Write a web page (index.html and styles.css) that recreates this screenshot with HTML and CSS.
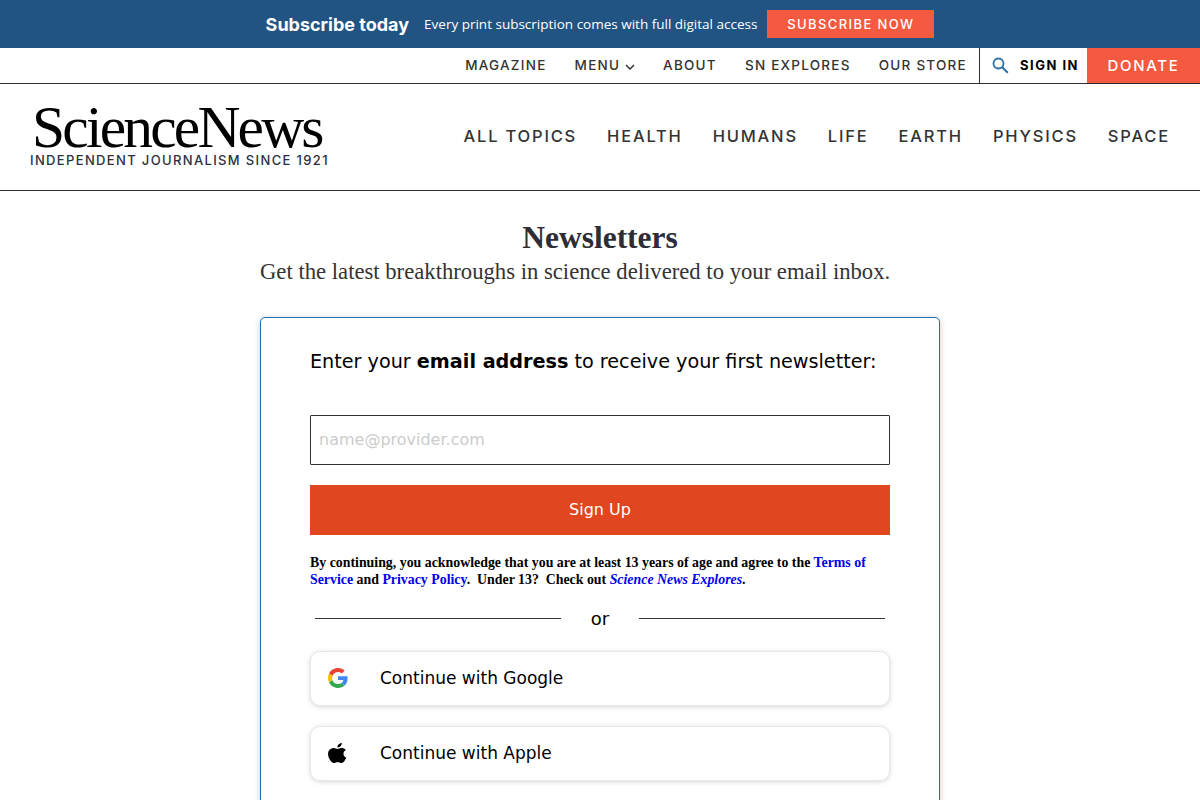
FILE: index.html
```html
<!DOCTYPE html>
<html lang="en">
<head>
    <meta charset="UTF-8">
    <meta name="viewport" content="width=device-width, initial-scale=1.0">
    <title>Newsletters - Science News</title>
    <link rel="stylesheet" href="styles.css">
</head>
<body>
    <div class="promo">
        <span class="promo-title">Subscribe today</span>
        <span class="promo-text">Every print subscription comes with full digital access</span>
        <a href="#" class="promo-button">SUBSCRIBE NOW</a>
    </div>

    <div class="topbar">
        <nav class="topnav">
            <a href="#">MAGAZINE</a>
            <a href="#">MENU
                <svg class="chevron" viewBox="0 0 10 6" width="10" height="6"><path d="M1 1l4 4 4-4" fill="none" stroke="#333" stroke-width="1.5"/></svg>
            </a>
            <a href="#">ABOUT</a>
            <a href="#">SN EXPLORES</a>
            <a href="#">OUR STORE</a>
        </nav>
        <div class="account">
            <svg class="search-icon" viewBox="0 0 17 17" width="17" height="17"><circle cx="6.500" cy="6.500" r="5" fill="none" stroke="#2a6fa8" stroke-width="1.800"/><path d="M10.200 10.200l5.600 5.600" stroke="#2a6fa8" stroke-width="2"/></svg>
            <a href="#" class="signin">SIGN IN</a>
        </div>
        <a href="#" class="donate">DONATE</a>
    </div>

    <header class="masthead">
        <a href="#" class="logo">
            <span class="logo-name">ScienceNews</span>
            <span class="logo-tag">INDEPENDENT JOURNALISM SINCE 1921</span>
        </a>
        <nav class="mainnav">
            <a href="#">ALL TOPICS</a>
            <a href="#">HEALTH</a>
            <a href="#">HUMANS</a>
            <a href="#">LIFE</a>
            <a href="#">EARTH</a>
            <a href="#">PHYSICS</a>
            <a href="#">SPACE</a>
        </nav>
    </header>

    <main class="content">
        <h1>Newsletters</h1>
        <p class="intro">Get the latest breakthroughs in science delivered to your email inbox.</p>

        <section class="card">
            <p class="card-lead">Enter your <strong>email address</strong> to receive your first newsletter:</p>
            <input class="email" type="email" placeholder="name@provider.com">
            <button class="signup">Sign Up</button>
            <p class="legal">By continuing, you acknowledge that you are at least 13 years of age and agree to the <a href="#">Terms of Service</a> and <a href="#">Privacy Policy</a>.&nbsp; Under 13?&nbsp; Check out <a href="#"><em>Science News Explores</em></a>.</p>
            <div class="divider"><span>or</span></div>
            <button class="social">
                <svg viewBox="0 0 48 48" width="20" height="20"><path fill="#EA4335" d="M24 9.500c3.500 0 6.700 1.200 9.200 3.600l6.900-6.900C35.900 2.400 30.500 0 24 0 14.600 0 6.500 5.400 2.600 13.200l8 6.200C12.500 13.600 17.800 9.500 24 9.500z"/><path fill="#4285F4" d="M47 24.500c0-1.600-.1-3.100-.4-4.500H24v9h12.900c-.6 3-2.200 5.500-4.700 7.200l7.700 6C44.400 37.900 47 31.800 47 24.500z"/><path fill="#FBBC05" d="M10.500 28.600c-.5-1.400-.8-3-.8-4.600s.3-3.200.8-4.600l-8-6.200C.9 16.500 0 20.100 0 24s.9 7.500 2.600 10.800l7.900-6.200z"/><path fill="#34A853" d="M24 48c6.500 0 11.900-2.100 15.900-5.800l-7.700-6c-2.200 1.500-4.900 2.300-8.200 2.300-6.200 0-11.500-4.200-13.400-9.900l-8 6.200C6.500 42.600 14.600 48 24 48z"/></svg>
                <span>Continue with Google</span>
            </button>
            <button class="social">
                <svg viewBox="4 1.800 14.100 16.200" preserveAspectRatio="none" width="20" height="20"><path fill="#000" d="M14.900 10.500c0-2 1.600-2.900 1.700-3-0.900-1.400-2.400-1.600-2.900-1.600-1.200-.1-2.400.7-3 .7s-1.600-.7-2.600-.7C6.700 5.900 5.400 6.700 4.700 7.900c-1.400 2.400-.4 6 1 8 .7 1 1.500 2.100 2.500 2 1 0 1.400-.6 2.600-.6s1.600.6 2.600.6c1.100 0 1.800-1 2.400-2 .8-1.100 1.100-2.200 1.100-2.300-.1 0-2-.8-2-3.100zM12.900 4.300c.5-.7.900-1.600.8-2.500-.8 0-1.700.5-2.300 1.200-.5.600-.9 1.500-.8 2.400.9.100 1.800-.4 2.300-1.100z"/></svg>
                <span>Continue with Apple</span>
            </button>
        </section>
    </main>
</body>
</html>
```

FILE: styles.css
```css
* {
    margin: 0;
    padding: 0;
    box-sizing: border-box;
}

body {
    height: 800px;
    overflow: hidden;
    background: #fff;
    color: #000;
    font-family: "DejaVu Sans", sans-serif;
}

a {
    text-decoration: none;
    color: inherit;
}

.promo {
    height: 48px;
    background: #215483;
    color: #fff;
    display: flex;
    align-items: center;
    justify-content: center;
}

.promo-title {
    font-family: "Inter", sans-serif;
    font-weight: 700;
    font-size: 18px;
    margin-right: 15px;
}

.promo-text {
    font-family: "Open Sans", sans-serif;
    font-size: 13.500px;
    margin-right: 10px;
}

.promo-button {
    width: 167px;
    height: 28px;
    background: #f55a40;
    font-family: "Inter", sans-serif;
    font-weight: 500;
    font-size: 13px;
    letter-spacing: 1.400px;
    display: flex;
    align-items: center;
    justify-content: center;
}

.topbar {
    height: 36px;
    display: flex;
    justify-content: flex-end;
    border-bottom: 1px solid #2d2d36;
    font-family: "Inter", sans-serif;
}

.topnav {
    display: flex;
    align-items: center;
    gap: 28px;
    padding-right: 12px;
    padding-bottom: 2px;
    font-size: 13.500px;
    font-weight: 500;
    letter-spacing: 1.250px;
    color: #333;
}

.account {
    width: 108px;
    display: flex;
    align-items: center;
    padding-left: 12px;
    border-left: 1px solid #2d2d36;
}

.signin {
    margin-left: 11px;
    padding-bottom: 2px;
    font-weight: 700;
    font-size: 13px;
    letter-spacing: 1.500px;
}

.donate {
    width: 113px;
    background: #f55a40;
    color: #fff;
    font-size: 15px;
    font-weight: 500;
    letter-spacing: 1.700px;
    display: flex;
    align-items: center;
    justify-content: center;
    padding-bottom: 1px;
}

.masthead {
    height: 107px;
    display: flex;
    justify-content: space-between;
    align-items: center;
    padding: 0 30px;
    border-bottom: 1px solid #2d2d36;
}

.logo {
    display: flex;
    flex-direction: column;
    margin-bottom: 4px;
}

.logo-name {
    font-family: "Liberation Serif", serif;
    font-size: 59.500px;
    line-height: 49px;
    letter-spacing: -2.800px;
    padding-left: 2px;
    color: #000;
}

.logo-tag {
    font-family: "Inter", sans-serif;
    font-weight: 500;
    font-size: 13px;
    letter-spacing: 1.350px;
    color: #2d3040;
}

.mainnav {
    display: flex;
    gap: 30px;
    margin-bottom: 2px;
    font-family: "Inter", sans-serif;
    font-size: 16.500px;
    font-weight: 500;
    letter-spacing: 1.800px;
    color: #333;
}

.content {
    width: 680px;
    margin: 0 auto;
    padding-top: 30px;
}

h1 {
    text-align: center;
    font-family: "Liberation Serif", serif;
    font-size: 31.500px;
    line-height: 34px;
    color: #2d2d36;
}

.intro {
    margin-top: 4px;
    font-family: "Liberation Serif", serif;
    font-size: 22.680px;
    line-height: 26px;
    color: #333;
    white-space: nowrap;
}

.card {
    margin-top: 32px;
    height: 600px;
    padding: 31px 49px;
    background: #fff;
    border: 1px solid #1f6fb0;
    border-radius: 5px;
    box-shadow: 0 1px 6px rgba(0, 0, 0, 0.2);
}

.card-lead {
    font-size: 19.200px;
    line-height: 26px;
}

.email {
    display: block;
    width: 100%;
    height: 50px;
    margin-top: 40px;
    padding: 0 8px 2px;
    border: 1px solid #333;
    border-radius: 1px;
    font-family: "DejaVu Sans", sans-serif;
    font-size: 16px;
}

.email::placeholder {
    color: #ccc;
}

.signup {
    display: block;
    width: 100%;
    height: 50px;
    margin-top: 20px;
    padding-bottom: 2px;
    border: none;
    background: #e04720;
    color: #fff;
    font-family: "DejaVu Sans", sans-serif;
    font-size: 16px;
}

.legal {
    margin-top: 19px;
    font-family: "Liberation Serif", serif;
    font-weight: 700;
    font-size: 13.870px;
    line-height: 17px;
}

.legal a {
    color: #0000ee;
}

.divider {
    display: flex;
    align-items: center;
    gap: 30px;
    margin: 19px 5px 0;
    line-height: 24px;
    font-size: 18px;
}

.divider::before,
.divider::after {
    content: "";
    flex: 1;
    margin-bottom: 2px;
    border-top: 1px solid #333;
}

.social {
    display: flex;
    align-items: center;
    width: 100%;
    height: 55px;
    margin-top: 20px;
    padding: 0 0 2px 17px;
    background: #fff;
    border: 1px solid #e8e8e8;
    border-radius: 10px;
    box-shadow: 0 1px 5px rgba(0, 0, 0, 0.16);
    font-family: "DejaVu Sans", sans-serif;
    font-size: 17px;
    color: #000;
}

.social span {
    margin-left: 32px;
}
```
